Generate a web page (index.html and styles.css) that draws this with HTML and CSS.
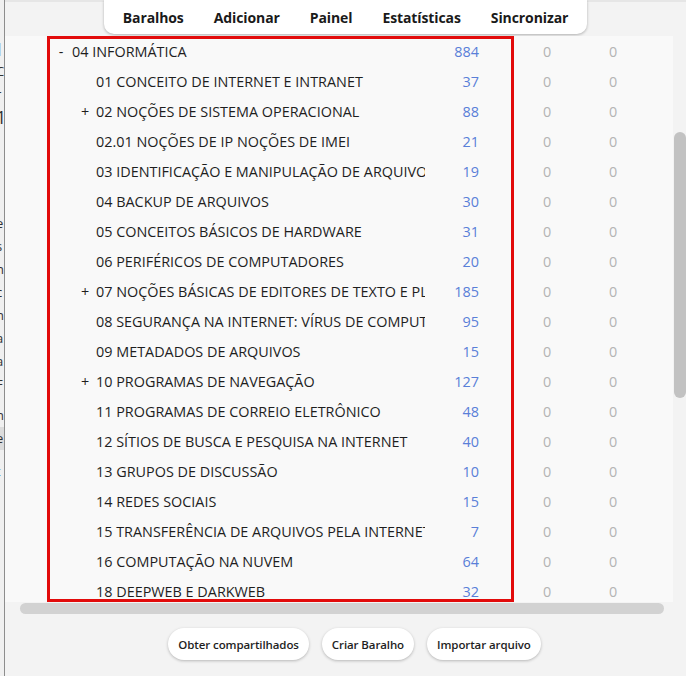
FILE: index.html
```html
<!DOCTYPE html>
<html lang="pt">
<head>
<meta charset="utf-8">
<title>Baralhos</title>
<link rel="stylesheet" href="styles.css">
</head>
<body>
<div class="behind">
  <div class="frag f1">i</div>
  <div class="frag f2">|</div>
  <div class="frag f3">C</div>
  <div class="frag f4">r</div>
  <div class="frag f5">1</div>
  <div class="frag f6 blue">,</div>
  <div class="frag f7">e</div>
  <div class="frag">s</div>
  <div class="frag">n</div>
  <div class="frag">c</div>
  <div class="frag">n</div>
  <div class="frag">a</div>
  <div class="frag">a</div>
  <div class="frag">F</div>
  <div class="frag f8">n</div>
  <div class="frag sel">e</div>
  <div class="frag f9 blue">t</div>
</div>
<div class="app">
  <div class="topbar">
    <nav class="toolbar">
      <span class="tb">Baralhos</span>
      <span class="tb">Adicionar</span>
      <span class="tb">Painel</span>
      <span class="tb">Estatísticas</span>
      <span class="tb">Sincronizar</span>
    </nav>
  </div>
  <div class="middle">
    <div class="panel">
      <div class="row top"><div class="name"><span class="tog">-</span>04 INFORMÁTICA</div><div class="cnt">884</div><div class="z">0</div><div class="z">0</div></div>
      <div class="row"><div class="name"><span class="tog"></span>01 CONCEITO DE INTERNET E INTRANET</div><div class="cnt">37</div><div class="z">0</div><div class="z">0</div></div>
      <div class="row"><div class="name"><span class="tog">+</span>02 NOÇÕES DE SISTEMA OPERACIONAL</div><div class="cnt">88</div><div class="z">0</div><div class="z">0</div></div>
      <div class="row"><div class="name"><span class="tog"></span>02.01 NOÇÕES DE IP NOÇÕES DE IMEI</div><div class="cnt">21</div><div class="z">0</div><div class="z">0</div></div>
      <div class="row"><div class="name"><span class="tog"></span>03 IDENTIFICAÇÃO E MANIPULAÇÃO DE ARQUIVOS</div><div class="cnt">19</div><div class="z">0</div><div class="z">0</div></div>
      <div class="row"><div class="name"><span class="tog"></span>04 BACKUP DE ARQUIVOS</div><div class="cnt">30</div><div class="z">0</div><div class="z">0</div></div>
      <div class="row"><div class="name"><span class="tog"></span>05 CONCEITOS BÁSICOS DE HARDWARE</div><div class="cnt">31</div><div class="z">0</div><div class="z">0</div></div>
      <div class="row"><div class="name"><span class="tog"></span>06 PERIFÉRICOS DE COMPUTADORES</div><div class="cnt">20</div><div class="z">0</div><div class="z">0</div></div>
      <div class="row"><div class="name"><span class="tog">+</span>07 NOÇÕES BÁSICAS DE EDITORES DE TEXTO E PLANILHAS</div><div class="cnt">185</div><div class="z">0</div><div class="z">0</div></div>
      <div class="row"><div class="name"><span class="tog"></span>08 SEGURANÇA NA INTERNET: VÍRUS DE COMPUTADOR</div><div class="cnt">95</div><div class="z">0</div><div class="z">0</div></div>
      <div class="row"><div class="name"><span class="tog"></span>09 METADADOS DE ARQUIVOS</div><div class="cnt">15</div><div class="z">0</div><div class="z">0</div></div>
      <div class="row"><div class="name"><span class="tog">+</span>10 PROGRAMAS DE NAVEGAÇÃO</div><div class="cnt">127</div><div class="z">0</div><div class="z">0</div></div>
      <div class="row"><div class="name"><span class="tog"></span>11 PROGRAMAS DE CORREIO ELETRÔNICO</div><div class="cnt">48</div><div class="z">0</div><div class="z">0</div></div>
      <div class="row"><div class="name"><span class="tog"></span>12 SÍTIOS DE BUSCA E PESQUISA NA INTERNET</div><div class="cnt">40</div><div class="z">0</div><div class="z">0</div></div>
      <div class="row"><div class="name"><span class="tog"></span>13 GRUPOS DE DISCUSSÃO</div><div class="cnt">10</div><div class="z">0</div><div class="z">0</div></div>
      <div class="row"><div class="name"><span class="tog"></span>14 REDES SOCIAIS</div><div class="cnt">15</div><div class="z">0</div><div class="z">0</div></div>
      <div class="row"><div class="name"><span class="tog"></span>15 TRANSFERÊNCIA DE ARQUIVOS PELA INTERNET</div><div class="cnt">7</div><div class="z">0</div><div class="z">0</div></div>
      <div class="row"><div class="name"><span class="tog"></span>16 COMPUTAÇÃO NA NUVEM</div><div class="cnt">64</div><div class="z">0</div><div class="z">0</div></div>
      <div class="row"><div class="name"><span class="tog"></span>18 DEEPWEB E DARKWEB</div><div class="cnt">32</div><div class="z">0</div><div class="z">0</div></div>
    </div>
    <div class="vtrack"><div class="vthumb"></div></div>
    <div class="highlight"></div>
  </div>
  <div class="hscroll"></div>
  <div class="actions">
    <button class="btn">Obter compartilhados</button>
    <button class="btn">Criar Baralho</button>
    <button class="btn">Importar arquivo</button>
  </div>
</div>
</body>
</html>
```
FILE: styles.css
```css
* { box-sizing: border-box; }
html, body { margin: 0; padding: 0; }
body {
  width: 686px;
  height: 676px;
  overflow: hidden;
  display: flex;
  background: #f3f3f3;
  font-family: "Open Sans", "Noto Sans", sans-serif;
  color: #1e1e1e;
}

/* window behind */
.behind {
  width: 5px;
  flex: none;
  background: #f0f0f0;
  border-right: 1px solid #8d8d8d;
  overflow: hidden;
  padding-top: 14px;
}
.frag {
  height: 23px;
  font-family: "Open Sans", sans-serif;
  font-size: 13px;
  line-height: 23px;
  text-indent: -4px;
  color: #333;
  white-space: nowrap;
}
.frag.f5 { font-size: 18px; }
.frag.f6 { margin-bottom: 60px; }
.frag.f8 { margin-top: 8px; }
.frag.sel { background: #dcdcdc; }
.frag.f9 { margin-top: 10px; }
.frag.blue { color: #3d7ab8; }

.app {
  flex: 1;
  display: flex;
  flex-direction: column;
  min-width: 0;
}

/* toolbar */
.topbar {
  height: 36px;
  display: flex;
  justify-content: center;
  align-items: flex-start;
  border-top: 2px solid #e6e6e6;
}
.toolbar {
  margin-top: -2px;
  height: 34px;
  background: #ffffff;
  border-radius: 0 0 10px 10px;
  box-shadow: 0 1px 3px rgba(0,0,0,0.28);
  display: flex;
  align-items: center;
  padding: 0 4px;
}
.tb {
  padding: 0 15px;
  font-size: 14px;
  font-weight: 700;
  color: #1a1a1a;
  letter-spacing: -0.1px;
}

/* deck list */
.middle {
  position: relative;
  height: 566px;
  display: flex;
}
.panel {
  flex: none;
  width: 668px;
  background: #f9f9f9;
  overflow: hidden;
}
.row {
  height: 30px;
  display: flex;
  align-items: center;
  padding-left: 48px;
  font-size: 14.4px;
  white-space: nowrap;
}
.name {
  width: 372px;
  overflow: hidden;
  display: flex;
  align-items: center;
  padding-left: 24px;
  color: #1e1e1e;
}
.row.top .name { padding-left: 0; }
.tog {
  flex: none;
  width: 16px;
  margin-right: 3px;
  text-align: center;
}
.cnt {
  width: 54px;
  text-align: right;
  color: #5a7fd8;
}
.z {
  width: 66px;
  text-align: center;
  color: #b4b4b4;
}
.cnt + .z { margin-left: 35px; }

.vtrack {
  flex: 1;
  background: #f3f3f3;
  padding-top: 96px;
  padding-left: 1px;
}
.vthumb {
  height: 266px;
  background: #c2c2c2;
  border-radius: 6px;
}

.highlight {
  position: absolute;
  left: 42px;
  top: 0;
  width: 467px;
  height: 566px;
  border: 3px solid #e20b0b;
  pointer-events: none;
}

.hscroll {
  margin: 1px 0 0 15px;
  width: 644px;
  height: 11px;
  background: #d2d2d2;
  border-radius: 6px;
}

.actions {
  margin-top: 14px;
  display: flex;
  justify-content: center;
  gap: 13px;
  padding-left: 18px;
}
.btn {
  height: 32px;
  padding: 0 10px;
  border: none;
  border-radius: 16px;
  background: #ffffff;
  box-shadow: 0 1px 3px rgba(0,0,0,0.25);
  font-family: "Open Sans", "Noto Sans", sans-serif;
  font-size: 11.5px;
  font-weight: 600;
  letter-spacing: -0.1px;
  color: #1e1e1e;
}
```
